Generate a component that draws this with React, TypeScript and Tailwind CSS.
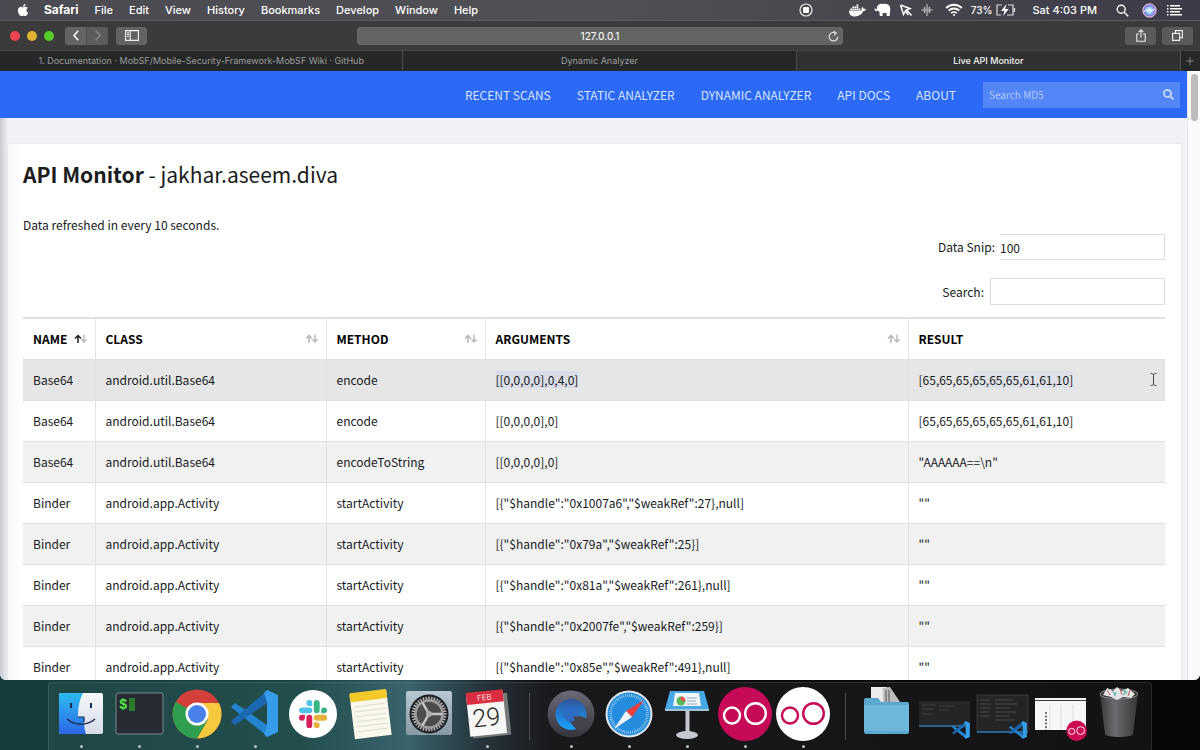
import type { ReactNode } from "react";
import { FaApple, FaDocker, FaSearch } from "react-icons/fa";
import { Plus } from "lucide-react";

const menus = ["File", "Edit", "View", "History", "Bookmarks", "Develop", "Window", "Help"];
const navLinks = ["RECENT SCANS", "STATIC ANALYZER", "DYNAMIC ANALYZER", "API DOCS", "ABOUT"];

type Row = { name: string; cls: string; method: string; args: string; result: string };
const activity = (args: string): Row => ({
  name: "Binder",
  cls: "android.app.Activity",
  method: "startActivity",
  args,
  result: '""',
});
const rows: Row[] = [
  { name: "Base64", cls: "android.util.Base64", method: "encode", args: "[[0,0,0,0],0,4,0]", result: "[65,65,65,65,65,65,61,61,10]" },
  { name: "Base64", cls: "android.util.Base64", method: "encode", args: "[[0,0,0,0],0]", result: "[65,65,65,65,65,65,61,61,10]" },
  { name: "Base64", cls: "android.util.Base64", method: "encodeToString", args: "[[0,0,0,0],0]", result: '"AAAAAA==\\n"' },
  activity('[{"$handle":"0x1007a6","$weakRef":27},null]'),
  activity('[{"$handle":"0x79a","$weakRef":25}]'),
  activity('[{"$handle":"0x81a","$weakRef":261},null]'),
  activity('[{"$handle":"0x2007fe","$weakRef":259}]'),
  activity('[{"$handle":"0x85e","$weakRef":491},null]'),
];

function MenuBar() {
  return (
    <header className="flex h-5 shrink-0 items-center bg-linear-to-r from-[#4b4a52] via-[#505155] to-[#3d3b47] pr-[18px] pl-4 text-[11px] font-medium text-white">
      <button aria-label="Apple menu" className="mr-4 w-3">
        <FaApple size={14} />
      </button>
      <nav aria-label="Application menu" className="flex items-center gap-4">
        <button className="text-[12px] font-bold">Safari</button>
        {menus.map((m) => (
          <button key={m}>{m}</button>
        ))}
      </nav>
      <div className="ml-auto flex items-center">
        <svg className="mr-9" width="14" height="14" viewBox="0 0 14 14" aria-hidden="true">
          <circle cx="7" cy="7" r="6" fill="none" stroke="#eee" strokeWidth="1.2" />
          <rect x="4" y="4" width="6" height="6" rx="1.2" fill="#fff" />
        </svg>
        <FaDocker size={17} className="mr-2" />
        <svg className="mr-2" width="17" height="14" viewBox="0 0 17 14" aria-hidden="true">
          <path
            fill="#fff"
            d="M5 1.500C6.200.5 8 .4 9.300 1c2.500-.5 5.200.2 6.200 2 .8 1.500.9 3.400.6 5l-.5 5h-2.800l-.3-3.300c-1.200.5-2.500.5-3.700.2L8.500 13H5.800L5.400 8.800C4.700 8.500 4.200 8 4 7.300c-.5.8-1.300 1-2.200.7C.9 7.600.5 6.600.4 5.400l1 .1c.2.700.5 1.100 1 1C3 6.300 2.900 5.200 3 4.200 3.200 3 4 2.200 5 1.500z"
          />
        </svg>
        <svg className="mr-2" width="14" height="14" viewBox="0 0 14 14" aria-hidden="true">
          <path d="M1.500 2l9.500 3.500-3.500 1.500 5 5.500M1.500 2l3 9.500 2-3.500 2.800 4" fill="none" stroke="#fff" strokeWidth="1.500" />
        </svg>
        <svg className="mr-3" width="12" height="14" viewBox="0 0 12 14" fill="#a9a8ae" aria-hidden="true">
          <path d="M5.300 1h1.400v12H5.300zM2.800 4h1.700v6H2.800zM7.500 4h1.700v6H7.500zM.5 6.300h11v1.400H.5z" />
        </svg>
        <svg className="mr-2" width="18" height="14" viewBox="0 0 18 14" fill="none" stroke="#fff" strokeWidth="1.800" aria-hidden="true">
          <path d="M1.200 5a11 11 0 0 1 15.600 0M3.700 7.700a7.500 7.500 0 0 1 10.600 0M6.200 10.200a4 4 0 0 1 5.600 0" />
          <circle cx="9" cy="12" r="1" fill="#fff" stroke="none" />
        </svg>
        <span className="text-[10px]">73%</span>
        <svg className="mr-4 ml-1" width="20" height="12" viewBox="0 0 20 12" aria-hidden="true">
          <path d="M6 1H1v10h4M12 1h5v10h-6M18.500 4v4" fill="none" stroke="#ddd" strokeWidth="1.200" />
          <path d="M10.500 0L5 7h3.500L7 12l5.800-7H9.200z" fill="#fff" />
        </svg>
        <time>Sat 4:03 PM</time>
        <svg className="ml-[19px]" width="13" height="13" viewBox="0 0 13 13" fill="none" stroke="#fff" strokeWidth="1.400" aria-hidden="true">
          <circle cx="5.200" cy="5.200" r="4" />
          <path d="M8.200 8.200l4 4" />
        </svg>
        <svg className="ml-[13px]" width="15" height="15" viewBox="0 0 15 15" aria-hidden="true">
          <defs>
            <radialGradient id="siri">
              <stop offset="0" stopColor="#fff" />
              <stop offset=".4" stopColor="#9fd8ff" />
              <stop offset=".75" stopColor="#7c85dc" />
              <stop offset="1" stopColor="#c977c9" />
            </radialGradient>
          </defs>
          <circle cx="7.500" cy="7.500" r="6.700" fill="url(#siri)" stroke="#e3c6ea" />
          <path d="M2 9c3-5 7 1 11-3" stroke="#fff" fill="none" />
        </svg>
        <svg className="ml-[10px]" width="15" height="12" viewBox="0 0 15 12" fill="#fff" aria-hidden="true">
          <path d="M0 1h1.500v1.500H0zM3 1h10v1.500H3zM0 4h1.500v1.500H0zM3 4h12v1.500H3zM0 7h1.500v1.500H0zM3 7h10v1.500H3zM0 10h1.500v1.500H0zM3 10h12v1.500H3z" />
        </svg>
      </div>
    </header>
  );
}

function BrowserChrome() {
  return (
    <>
      <div className="grid h-[30px] shrink-0 grid-cols-[1fr_minmax(0,486px)_1fr] items-center border-t border-[#5a5b5c] bg-[#3a3b3a] px-[7px]">
        <div className="flex items-center pl-[3px]">
          <div className="flex gap-[7px]">
            <button aria-label="Close window" className="size-[10px] rounded-full bg-[#ee4350]" />
            <button aria-label="Minimize window" className="size-[10px] rounded-full bg-[#dfb134]" />
            <button aria-label="Zoom window" className="size-[10px] rounded-full bg-[#58cb2d]" />
          </div>
          <div className="ml-[11px] flex">
            <button aria-label="Back" className="flex h-[18px] w-[21px] items-center justify-center rounded-l-[3px] bg-[#636463]">
              <svg width="6" height="11" viewBox="0 0 6 11" fill="none" stroke="#fff" strokeWidth="1.500"><path d="M5.200.8L1 5.500l4.200 4.700" /></svg>
            </button>
            <button aria-label="Forward" className="flex h-[18px] w-[22px] items-center justify-center rounded-r-[3px] border-l border-[#4c4d4c] bg-[#5b5c5b]">
              <svg width="6" height="11" viewBox="0 0 6 11" fill="none" stroke="#858685" strokeWidth="1.500"><path d="M.8.8L5 5.500.8 10.200" /></svg>
            </button>
          </div>
          <button aria-label="Toggle sidebar" className="ml-2 flex h-[18px] w-[31px] items-center justify-center rounded-[3px] bg-[#626362]">
            <svg width="14" height="11" viewBox="0 0 14 11" fill="none" stroke="#f2f2f2" strokeWidth="1.100">
              <path d="M.6.6h12.800v9.800H.6zM5.200.6v9.800M2 2.700h2M2 4.500h2M2 6.300h2" />
            </svg>
          </button>
        </div>
        <div className="relative">
          <input
            aria-label="Address"
            defaultValue="127.0.0.1"
            className="block h-[18px] w-full rounded-[3px] bg-[#636563] text-center text-[10px] font-medium text-[#f0f0f0] outline-none"
          />
          <button aria-label="Reload" className="absolute top-1 right-1">
            <svg width="11" height="11" viewBox="0 0 11 11" fill="none" stroke="#ddd" strokeWidth="1.200">
              <path d="M9.800 5.700A4.300 4.300 0 1 1 7.800 2M5.400.2L8.200 2.100 6 4.400" />
            </svg>
          </button>
        </div>
        <div className="flex justify-end gap-[6px]">
          <button aria-label="Share" className="flex h-[18px] w-[31px] items-center justify-center rounded-[3px] bg-[#595a59]">
            <svg width="10" height="13" viewBox="0 0 10 13" fill="none" stroke="#eee" strokeWidth="1.100">
              <path d="M3 5H.8v7.200h8.400V5H7M5 8.500V1M2.700 3.200L5 .9l2.300 2.300" />
            </svg>
          </button>
          <button aria-label="Show tabs" className="flex h-[18px] w-[31px] items-center justify-center rounded-[3px] bg-[#595a59]">
            <svg width="11" height="11" viewBox="0 0 11 11" fill="none" stroke="#eee" strokeWidth="1.100">
              <path d="M.6 3.400h7v7h-7zM3.400 3.200V.6h7v7H7.800" />
            </svg>
          </button>
        </div>
      </div>
      <div role="tablist" className="flex h-[21px] shrink-0 border-t border-[#444] bg-[#262727] text-[9px] text-[#9c9c9c]">
        <button role="tab" aria-selected="false" className="flex-[403_1_0%] border-r border-[#4c4c4c]">
          1. Documentation · MobSF/Mobile-Security-Framework-MobSF Wiki · GitHub
        </button>
        <button role="tab" aria-selected="false" className="flex-[393_1_0%] border-r border-[#4c4c4c]">
          Dynamic Analyzer
        </button>
        <button role="tab" aria-selected="true" className="flex-[384_1_0%] bg-[#303131] font-medium text-[#f4f4f4]">
          Live API Monitor
        </button>
        <button aria-label="New tab" className="flex w-5 items-center justify-center border-l border-[#505050]">
          <Plus size={12} strokeWidth={1.5} />
        </button>
      </div>
    </>
  );
}

function SortIcon({ ascending = false }: { ascending?: boolean }) {
  return (
    <svg width="14" height="10" viewBox="0 0 14 10" fill="none" strokeWidth="1.500" aria-hidden="true" className="shrink-0">
      <path d="M4 9V1.500M1 4.500l3-3 3 3" stroke={ascending ? "#222" : "#b5b5b5"} />
      <path d="M10 .5V8M7.300 5.300L10 8l2.700-2.700" stroke="#bbb" />
    </svg>
  );
}

const headings = ["NAME", "CLASS", "METHOD", "ARGUMENTS", "RESULT"];

function ApiTable() {
  return (
    <table className="mt-3 w-full table-fixed border-collapse border-t-2 border-[#dedfe1] text-left">
      <colgroup>
        <col className="w-[72px]" />
        <col className="w-[231px]" />
        <col className="w-[159px]" />
        <col className="w-[423px]" />
        <col />
      </colgroup>
      <thead>
        <tr className="h-[41px]">
          {headings.map((h, i) => (
            <th key={h} className="border-r border-[#e3e3e5] p-0 pl-[10px] font-bold text-black last:border-r-0">
              <div className="flex items-center justify-between pr-[7px]">
                {h}
                {i < 4 && <SortIcon ascending={i === 0} />}
              </div>
            </th>
          ))}
        </tr>
      </thead>
      <tbody>
        {rows.map((r, i) => (
          <tr
            key={i}
            className={`h-[41px] border-t border-[#dfdfe0] whitespace-nowrap ${i === 0 ? "bg-[#e6e6e6]" : i % 2 === 0 ? "bg-[#f1f1f1]" : "bg-white"}`}
          >
            <td className="border-r border-[#e3e3e5] p-0 pl-[10px]">{r.name}</td>
            <td className="border-r border-[#e3e3e5] p-0 pl-[10px]">{r.cls}</td>
            <td className="border-r border-[#e3e3e5] p-0 pl-[10px]">{r.method}</td>
            <td className="border-r border-[#e3e3e5] p-0 pl-[10px]">
              <span className={i === 0 ? "bg-[#dadce6]" : ""}>{r.args}</span>
            </td>
            <td className="p-0 pl-[10px]">
              {i === 0 ? (
                <div className="flex items-center justify-between pr-2">
                  <span>
                    [65,65,65,<span className="bg-[#dfe1e8]">65,65,65,61,61,10]</span>
                  </span>
                  <svg width="7" height="13" viewBox="0 0 7 13" fill="none" stroke="#444" aria-hidden="true">
                    <path d="M.5.500c2 0 3 .5 3 1.500v9c0 1-1 1.500-3 1.500M6.500.500c-2 0-3 .5-3 1.500v9c0 1 1 1.500 3 1.500" />
                  </svg>
                </div>
              ) : (
                r.result
              )}
            </td>
          </tr>
        ))}
      </tbody>
    </table>
  );
}

function Page() {
  return (
    <div className="flex min-h-0 flex-1 overflow-hidden rounded-b-md bg-[#f1f2f6] font-['Noto_Sans_CJK_SC',sans-serif] text-[12px] leading-5 text-[#16191c]">
      <div className="min-w-0 flex-1">
        <nav aria-label="Site" className="flex h-[47px] items-center justify-end gap-[26px] bg-[#2c69f7] pr-[7px] text-[#d6e6ff]">
          {navLinks.map((l) => (
            <a key={l} href="#">
              {l}
            </a>
          ))}
          <form role="search" className="ml-px flex h-[26px] w-[197px] items-center bg-[#5486f7] px-[6px]">
            <input
              aria-label="Search MD5"
              placeholder="Search MD5"
              className="w-0 flex-1 bg-transparent text-[10px] outline-none placeholder:text-[#b0cafc]"
            />
            <button aria-label="Submit search">
              <FaSearch size={11} color="#c5dcff" />
            </button>
          </form>
        </nav>
        <div className="bg-linear-to-r from-[#c9cacf] to-[#f1f2f6] to-[8px] pt-[26px] pr-[6px] pl-2">
          <main className="bg-linear-to-r from-[#f8f9fd] to-white to-[16px] pt-4 pr-4 pl-[15px] shadow-[0_0_3px_rgba(0,0,0,0.08)]">
            <h1 className="text-[21px] leading-7 text-[#1b1c20]">
              <b>API Monitor</b> - jakhar.aseem.diva
            </h1>
            <p className="mt-[27px] leading-5">Data refreshed in every 10 seconds.</p>
            <div className="-mt-px flex flex-col items-end gap-[18px]">
              <label className="flex items-center gap-[5px]">
                Data Snip:
                <input
                  defaultValue="100"
                  className="h-[26px] w-[165px] border border-l-0 border-[#dcdde0] bg-white outline-none"
                />
              </label>
              <label className="flex items-center gap-[6px]">
                Search:
                <input className="h-[27px] w-[175px] border border-[#dcdde0] bg-white outline-none" />
              </label>
            </div>
            <ApiTable />
          </main>
        </div>
      </div>
      <div className="w-[13px] shrink-0 border-l border-[#e8e8ea] bg-[#fafafa] pt-[3px] pl-[3px]">
        <div className="h-[47px] w-[7px] rounded-full bg-[#bdbdbd]" />
      </div>
    </div>
  );
}

function DockItem({ label, running = false, children }: { label: string; running?: boolean; children: ReactNode }) {
  return (
    <button aria-label={label} className="flex w-[58px] flex-col items-center">
      <svg width="56" height="62" viewBox="0 0 56 62">
        {children}
      </svg>
      <span className={`size-[3px] rounded-full ${running ? "bg-[#b9c4c4]" : ""}`} />
    </button>
  );
}

function Separator() {
  return (
    <div className="flex w-[26px] justify-center py-[10px]">
      <div className="w-px bg-[#4d4d50]" />
    </div>
  );
}

function VsCode() {
  return (
    <>
      <path d="M0 17l4-4 32 22v11z" fill="#2584cf" />
      <path d="M0 31l4 4L36 13V1z" fill="#1c68b0" />
      <path d="M36 0l11 5v37l-11 5-3-3 3-8V12l-3-9z" fill="#379cea" />
    </>
  );
}

function Flickr({ bg, fg }: { bg: string; fg: string }) {
  return (
    <>
      <circle cx="28" cy="31" r="27" fill={bg} />
      <circle cx="15" cy="32.500" r="8" fill="none" stroke={fg} strokeWidth="2.400" />
      <circle cx="38.500" cy="30.500" r="10.300" fill="none" stroke={fg} strokeWidth="2.400" />
    </>
  );
}

const slackColors = ["#d8205a", "#4ec2e8", "#3bb383", "#e5b13a"];
const teeth = Array.from({ length: 36 }, (_, i) => i * 10);
const ticks = Array.from({ length: 60 }, (_, i) => i * 6);

function Dock() {
  return (
    <footer className="flex h-[70px] shrink-0 justify-center pt-[2px]">
      <div className="flex rounded-t-sm border border-b-0 border-white/10 bg-white/5 px-[3px]">
        <DockItem label="Finder" running>
          <defs>
            <linearGradient id="fl" x2="0" y2="1"><stop stopColor="#2bbdf0" /><stop offset="1" stopColor="#2d66e8" /></linearGradient>
            <linearGradient id="fr" x2="0" y2="1"><stop stopColor="#f4f7fb" /><stop offset="1" stopColor="#d7dce8" /></linearGradient>
          </defs>
          <rect x="6" y="10" width="44" height="41" rx="2" fill="url(#fr)" />
          <path d="M8 10h22c-4 8-5 15-5 24h6c0 6 0 12 2 17H8a2 2 0 0 1-2-2V12a2 2 0 0 1 2-2z" fill="url(#fl)" />
          <path d="M18 20v5M38 20v5" stroke="#172b4b" strokeWidth="2" />
          <path d="M14 36c8 7 20 7 28 0" fill="none" stroke="#172b4b" strokeWidth="1.600" />
          <path d="M25 34h6v5" fill="none" stroke="#172b4b" strokeWidth="1.200" />
        </DockItem>
        <DockItem label="Terminal" running>
          <rect x="5" y="10" width="47" height="41" rx="2" fill="#272b33" stroke="#7a8b8e" />
          <text x="8" y="26" fill="#54e63e" fontSize="14" fontWeight="700" fontFamily="Liberation Mono, monospace">$</text>
          <rect x="18" y="15" width="6" height="13" fill="#2c7a2a" />
        </DockItem>
        <DockItem label="Chrome" running>
          <circle cx="28" cy="31" r="24.500" fill="#d33f3a" />
          <path d="M28 20h21.900A24.500 24.500 0 0 1 28 55.500l10.500-18.500z" fill="#f6c93e" />
          <path d="M28 31L6.800 18.800A24.500 24.500 0 0 0 28 55.500l11-19z" fill="#2f9e4e" />
          <circle cx="28" cy="31" r="11.500" fill="#fff" />
          <circle cx="28" cy="31" r="9" fill="#4a80ea" />
        </DockItem>
        <DockItem label="Visual Studio Code" running>
          <g transform="translate(4 7)"><VsCode /></g>
        </DockItem>
        <DockItem label="Slack">
          <circle cx="28" cy="31" r="24" fill="#fff" />
          <g transform="translate(14 17) scale(1.170)">
            {slackColors.map((c, i) => (
              <path
                key={c}
                transform={`rotate(${i * 90} 12 12)`}
                fill={c}
                d="M5.042 15.165a2.521 2.521 0 1 1-2.520-2.520h2.520zM6.313 15.165a2.521 2.521 0 0 1 5.042 0v6.313a2.521 2.521 0 0 1-5.042 0z"
              />
            ))}
          </g>
        </DockItem>
        <DockItem label="Notes">
          <g transform="rotate(-7 28 31)">
            <rect x="9" y="10" width="37" height="44" fill="#faf8ec" />
            <rect x="9" y="8" width="37" height="9" rx="1" fill="#f3c92c" />
            <path d="M12 22h31M12 27h31M12 32h31M12 37h31M12 42h31M12 47h31" stroke="#d6d6cf" strokeWidth=".8" />
          </g>
        </DockItem>
        <DockItem label="System Preferences">
          <defs><linearGradient id="sp" x2="0" y2="1"><stop stopColor="#b9c9d1" /><stop offset="1" stopColor="#8799a4" /></linearGradient></defs>
          <rect x="5" y="8" width="46" height="44" rx="2" fill="url(#sp)" />
          <circle cx="28" cy="31" r="19.500" fill="#1d1f22" />
          {teeth.map((a) => (
            <rect key={a} x="27.200" y="13.500" width="1.600" height="4" fill="#b5b5b5" transform={`rotate(${a} 28 31)`} />
          ))}
          <circle cx="28" cy="31" r="13.500" fill="#4c4c4c" stroke="#9d9d9d" strokeWidth="2.500" />
          <path d="M28 31h13M28 31l-6.500-11.300M28 31l-6.500 11.300" stroke="#c5c5c5" strokeWidth="2.500" />
          <circle cx="28" cy="31" r="3" fill="#aaa" />
        </DockItem>
        <DockItem label="Calendar" running>
          <g transform="rotate(-6 28 31)">
            <rect x="12" y="12" width="38" height="42" fill="#757a78" />
            <rect x="9" y="10" width="37" height="42" fill="#f7f7f5" />
            <rect x="9" y="8" width="37" height="12" fill="#d92e42" />
            <text x="27" y="17" fill="#ffd9dc" fontSize="8" textAnchor="middle">FEB</text>
            <text x="27" y="43" fill="#252525" fontSize="25" fontWeight="300" fontFamily="Roboto, sans-serif" textAnchor="middle">29</text>
          </g>
        </DockItem>
        <Separator />
        <DockItem label="QuickTime Player" running>
          <defs>
            <linearGradient id="qr" x2="0" y2="1"><stop stopColor="#6b6b78" /><stop offset="1" stopColor="#33343c" /></linearGradient>
            <linearGradient id="qt" x2="0" y2="1"><stop stopColor="#31549c" /><stop offset="1" stopColor="#17a3ff" /></linearGradient>
          </defs>
          <circle cx="28" cy="31" r="23.500" fill="url(#qr)" />
          <path d="M33 46A15.500 15.500 0 1 1 43 35l-8-3a7 7 0 1 0-9 6z" fill="url(#qt)" />
          <circle cx="28" cy="31" r="7.500" fill="#2d6bc4" />
          <path d="M30 33l16 4-4 9-5 2z" fill="#42434c" />
        </DockItem>
        <DockItem label="Safari" running>
          <circle cx="28" cy="31" r="23.500" fill="#dfe7ec" />
          <circle cx="28" cy="31" r="21.500" fill="#258ddd" />
          {ticks.map((a) => (
            <rect key={a} x="28" y="11" width=".6" height="3" fill="#c5e3f8" transform={`rotate(${a} 28 31)`} />
          ))}
          <path d="M43 17L31 34l-6-6z" fill="#ed3d3f" />
          <path d="M13 46l12-18 6 6z" fill="#f3f4f5" />
        </DockItem>
        <DockItem label="Keynote" running>
          <ellipse cx="28" cy="52" rx="11" ry="4" fill="#c6c9d0" />
          <path d="M26.500 26h4v26h-4z" fill="#c7c9cf" />
          <path d="M11 8h34l5 18H6z" fill="#48a7e5" />
          <path d="M6 26h44v2H6z" fill="#a4c3d5" />
          <path d="M16 10h24l2 13H14z" fill="#f2f7fa" />
          <circle cx="22" cy="18" r="4.500" fill="#58b95b" />
          <path d="M22 18v-4.500a4.500 4.500 0 0 1 4.500 4.500z" fill="#e94b4b" />
          <path d="M28 15h10M28 18h9M28 21h10" stroke="#90aabc" />
        </DockItem>
        <DockItem label="Flickr Uploader" running>
          <Flickr bg="#c60a58" fg="#fff" />
        </DockItem>
        <DockItem label="Flickr" running>
          <Flickr bg="#fff" fg="#c60a58" />
        </DockItem>
        <Separator />
        <DockItem label="Downloads">
          <path d="M12 4h16v20H12z" fill="#ebebeb" />
          <path d="M24 5l7-1 10 15H24z" fill="#bdbdbd" />
          <path d="M27 7v12M30 7v12" stroke="#555" />
          <path d="M5 17a2 2 0 0 1 2-2h12l3 4h26a2 2 0 0 1 2 2v28a2 2 0 0 1-2 2H7a2 2 0 0 1-2-2z" fill="#5ba8cd" />
          <path d="M5 22h45v26H5z" fill="#6db8da" />
        </DockItem>
        <DockItem label="Editor window">
          <rect x="2" y="18" width="51" height="25" fill="#242527" />
          <path d="M5 22h14M5 26h12M22 23h16M22 27h10M5 31h10" stroke="#404346" />
          <path d="M2 43h51" stroke="#2b79b5" strokeWidth="1.500" />
          <g transform="translate(35 38) scale(.380)"><VsCode /></g>
        </DockItem>
        <DockItem label="Second editor window">
          <rect x="2" y="12" width="51" height="37" fill="#242527" stroke="#3a3b3e" />
          <path d="M5 17h10M5 21h11M5 25h10M5 29h9M5 33h10M20 17h18M20 21h22M20 25h15M20 29h21M20 33h14M20 37h20" stroke="#45484b" />
          <path d="M2 49h51" stroke="#2b79b5" strokeWidth="1.500" />
          <g transform="translate(34 38) scale(.380)"><VsCode /></g>
        </DockItem>
        <DockItem label="Minimized window">
          <rect x="2" y="15" width="51" height="32" fill="#f6f6f6" />
          <path d="M2 17.500h51" stroke="#3c3c3c" />
          <path d="M13 29v18" stroke="#555" strokeDasharray="2 1.500" strokeWidth="1.500" />
          <path d="M17 22v24M28 22v24M40 22v16" stroke="#dcdcdc" />
          <g transform="translate(33 36) scale(.380)"><Flickr bg="#cd0b52" fg="#fff" /></g>
        </DockItem>
        <DockItem label="Trash">
          <defs><linearGradient id="tr"><stop stopColor="#39393c" /><stop offset=".4" stopColor="#6c6c70" /><stop offset="1" stopColor="#353538" /></linearGradient></defs>
          <path d="M9 11h38l-5 40c-1 4-27 4-28 0z" fill="url(#tr)" />
          <ellipse cx="28" cy="11" rx="19" ry="5" fill="#333" stroke="#8d8d8d" />
          <path d="M12 12l4-7 6 3 4-4 5 4 6-3 7 6-4 4-8-1-6 3-6-3z" fill="#e6e6e6" />
          <path d="M21 8l5 2-2 4zM33 6l4 3-5 4z" fill="#7dbfb3" />
          <path d="M16 7l3 5M29 6l2 6M39 7l-2 6" stroke="#b75c68" />
        </DockItem>
      </div>
    </footer>
  );
}

export default function App() {
  return (
    <div className="flex h-screen flex-col overflow-hidden bg-[linear-gradient(90deg,#153c3c_0%,#164543_25%,#2f5c66_34%,#1b2a32_40%,#0d0d10_46%,#060608_100%)] font-[Inter,sans-serif]">
      <MenuBar />
      <BrowserChrome />
      <Page />
      <Dock />
    </div>
  );
}
